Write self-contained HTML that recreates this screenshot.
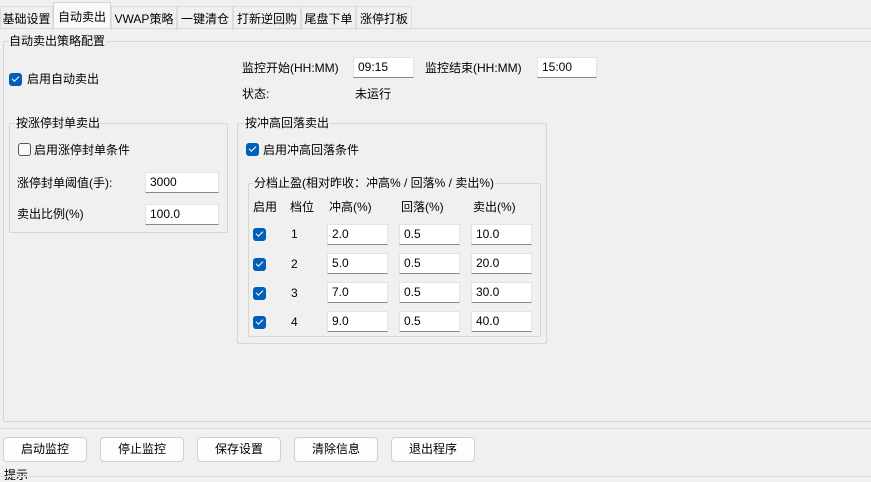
<!DOCTYPE html><html><head><meta charset="utf-8"><style>
*{box-sizing:border-box;margin:0;padding:0}
body{width:871px;height:478px;background:#f0f0f0;font-family:"Liberation Sans","Noto Sans CJK SC",sans-serif;font-size:12px;color:#000;position:relative;overflow:hidden}
.a{position:absolute;white-space:nowrap;line-height:14px}
.tab{position:absolute;top:4px;height:24px;line-height:24px;text-align:center;border:1px solid #dcdcdc;border-bottom:none;background:#f0f0f0;font-size:12px}
.grp{position:absolute;border:1px solid #d6d6d6;border-radius:2px}
.gt{position:absolute;background:#f0f0f0;padding:0 1px;line-height:14px}
.in{position:absolute;height:21px;background:#fff;border:1px solid #e3e3e3;border-bottom:1px solid #888;padding-left:4px;line-height:19px;font-size:12px}
.cb{position:absolute;width:13px;height:13px;border-radius:3px;background:#005fb8}
.cb::after{content:"";position:absolute;left:3px;top:2px;width:6px;height:3px;border-left:1.3px solid #fff;border-bottom:1.3px solid #fff;transform:rotate(-45deg);transform-origin:center;top:3px}
.cbo{position:absolute;width:13px;height:13px;border-radius:3px;border:1px solid #555;background:#fafafa}
.btn{position:absolute;top:437px;width:84px;height:25px;border:1px solid #d0d0d0;border-radius:4px;background:#fdfdfd;text-align:center;line-height:23px}
</style></head><body>
<div class="tab" style="left:0;width:53px;top:6px">基础设置</div>
<div class="tab" style="left:53px;width:58px;top:2px;height:27px;background:#f9f9f9;line-height:28px;border-color:#d6d6d6">自动卖出</div>
<div class="tab" style="left:111px;width:66px;top:6px">VWAP策略</div>
<div class="tab" style="left:177px;width:56px;top:6px">一键清仓</div>
<div class="tab" style="left:233px;width:68px;top:6px">打新逆回购</div>
<div class="tab" style="left:301px;width:55px;top:6px">尾盘下单</div>
<div class="tab" style="left:356px;width:56px;top:6px">涨停打板</div>
<div style="position:absolute;left:0;top:28px;width:871px;height:1px;background:#dcdcdc"></div>
<div class="grp" style="left:3px;top:41px;width:872px;height:381px"></div>
<div class="gt" style="left:8px;top:34px">自动卖出策略配置</div>

<div class="cb" style="left:9px;top:73px"></div><div class="a" style="left:27px;top:72px">启用自动卖出</div>
<div class="a" style="left:242px;top:61px">监控开始(HH:MM)</div><div class="in" style="left:353px;top:57px;width:61px">09:15</div>
<div class="a" style="left:425px;top:61px">监控结束(HH:MM)</div><div class="in" style="left:537px;top:57px;width:60px">15:00</div>
<div class="a" style="left:242px;top:87px">状态:</div><div class="a" style="left:355px;top:87px">未运行</div>

<div class="grp" style="left:9px;top:123px;width:219px;height:110px"></div>
<div class="gt" style="left:15px;top:116px">按涨停封单卖出</div>
<div class="cbo" style="left:18px;top:143px"></div><div class="a" style="left:34px;top:143px">启用涨停封单条件</div>
<div class="a" style="left:17px;top:176px">涨停封单阈值(手):</div><div class="in" style="left:145px;top:172px;width:74px">3000</div>
<div class="a" style="left:17px;top:207px">卖出比例(%)</div><div class="in" style="left:145px;top:204px;width:74px">100.0</div>

<div class="grp" style="left:237px;top:123px;width:310px;height:221px"></div>
<div class="gt" style="left:244px;top:116px">按冲高回落卖出</div>
<div class="cb" style="left:246px;top:143px"></div><div class="a" style="left:263px;top:143px">启用冲高回落条件</div>
<div class="grp" style="left:248px;top:183px;width:293px;height:154px"></div>
<div class="gt" style="left:253px;top:176px">分档止盈(相对昨收：冲高% / 回落% / 卖出%)</div>
<div class="a" style="left:253px;top:200px">启用</div><div class="a" style="left:290px;top:200px">档位</div><div class="a" style="left:329px;top:200px">冲高(%)</div><div class="a" style="left:401px;top:200px">回落(%)</div><div class="a" style="left:473px;top:200px">卖出(%)</div>

<div class="cb" style="left:253px;top:228px"></div><div class="a" style="left:291px;top:227px">1</div>
<div class="in" style="left:327px;top:224px;width:61px">2.0</div><div class="in" style="left:399px;top:224px;width:61px">0.5</div><div class="in" style="left:471px;top:224px;width:61px">10.0</div>
<div class="cb" style="left:253px;top:258px"></div><div class="a" style="left:291px;top:257px">2</div>
<div class="in" style="left:327px;top:253px;width:61px">5.0</div><div class="in" style="left:399px;top:253px;width:61px">0.5</div><div class="in" style="left:471px;top:253px;width:61px">20.0</div>
<div class="cb" style="left:253px;top:287px"></div><div class="a" style="left:291px;top:286px">3</div>
<div class="in" style="left:327px;top:282px;width:61px">7.0</div><div class="in" style="left:399px;top:282px;width:61px">0.5</div><div class="in" style="left:471px;top:282px;width:61px">30.0</div>
<div class="cb" style="left:253px;top:316px"></div><div class="a" style="left:291px;top:315px">4</div>
<div class="in" style="left:327px;top:311px;width:61px">9.0</div><div class="in" style="left:399px;top:311px;width:61px">0.5</div><div class="in" style="left:471px;top:311px;width:61px">40.0</div>

<div style="position:absolute;left:0;top:428px;width:871px;height:1px;background:#dcdcdc"></div>
<div class="btn" style="left:3px">启动监控</div>
<div class="btn" style="left:100px">停止监控</div>
<div class="btn" style="left:197px">保存设置</div>
<div class="btn" style="left:294px">清除信息</div>
<div class="btn" style="left:391px">退出程序</div>
<div class="a" style="left:4px;top:468px">提示</div>
<div style="position:absolute;left:0;top:476px;width:871px;height:1px;background:#dcdcdc"></div>
</body></html>
